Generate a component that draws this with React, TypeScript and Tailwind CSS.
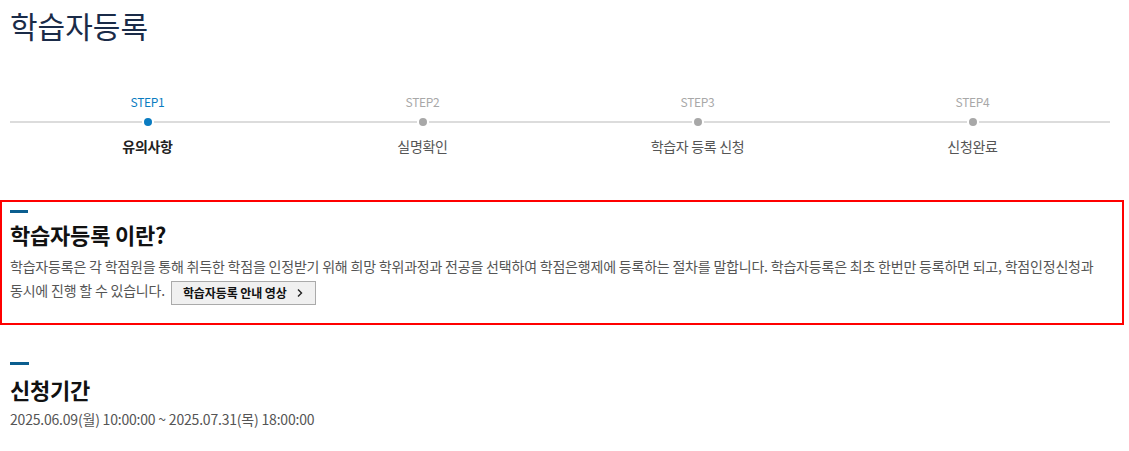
import React from "react";

const steps = [
  { step: "STEP1", name: "유의사항", active: true },
  { step: "STEP2", name: "실명확인", active: false },
  { step: "STEP3", name: "학습자 등록 신청", active: false },
  { step: "STEP4", name: "신청완료", active: false },
];

export default function App() {
  return (
    <div
      className="w-[1129px] h-[451px] bg-white overflow-hidden"
      style={{ fontFamily: '"Noto Sans CJK KR", "Noto Sans", sans-serif' }}
    >
      <h1 className="pl-[10px] pt-[5px] text-[30px] leading-[40px] font-normal text-[#1a2b48]">
        학습자등록
      </h1>

      <div className="ml-[10px] w-[1100px] mt-[48px] grid grid-cols-4">
        {steps.map((s) => (
          <div key={s.step} className="flex flex-col items-center">
            <div
              className={`text-[12px] leading-[18px] tracking-[-0.3px] ${
                s.active ? "text-[#0a7cc1]" : "text-[#a8a8a8]"
              }`}
            >
              {s.step}
            </div>
            <div className="w-full flex items-center mt-[7px] h-[8px]">
              <div className="flex-1 h-[2px] bg-[#dcdcdc]" />
              <div
                className={`w-[8px] h-[8px] rounded-full mx-[2px] ${
                  s.active ? "bg-[#0a7cc1]" : "bg-[#a8a8a8]"
                }`}
              />
              <div className="flex-1 h-[2px] bg-[#dcdcdc]" />
            </div>
            <div
              className={`mt-[10px] text-[14px] leading-[20px] tracking-[-0.3px] ${
                s.active ? "font-bold text-[#222]" : "text-[#555]"
              }`}
            >
              {s.name}
            </div>
          </div>
        ))}
      </div>

      <div className="mt-[44px] w-[1124px] h-[125px] border-2 border-[#ff0000] px-[8px] pt-[8px]">
        <div className="w-[18px] h-[3px] bg-[#0b5e8f]" />
        <h2 className="mt-[7px] text-[22px] leading-[28px] font-bold text-[#111] tracking-[-0.2px]">
          학습자등록 이란?
        </h2>
        <p className="mt-[6px] text-[14px] leading-[24px] text-[#555] tracking-[-0.2px] whitespace-nowrap">
          학습자등록은 각 학점원을 통해 취득한 학점을 인정받기 위해 희망 학위과정과 전공을 선택하여 학점은행제에 등록하는 절차를 말합니다. 학습자등록은 최초 한번만 등록하면 되고, 학점인정신청과
          <br />
          동시에 진행 할 수 있습니다.
          <button className="ml-[6px] inline-flex items-center align-[-2px] h-[24px] px-[11px] border border-[#aaa] bg-[#f0f0f0] text-[12px] font-bold text-[#111] leading-none tracking-[-0.1px]">
            학습자등록 안내 영상
            <svg width="8" height="10" viewBox="0 0 8 10" className="ml-[9px]">
              <path d="M2 1.5 L5.5 5 L2 8.5" fill="none" stroke="#222" strokeWidth="1.4" />
            </svg>
          </button>
        </p>
      </div>

      <div className="pl-[10px] mt-[37px]">
        <div className="w-[19px] h-[3px] bg-[#0b5e8f]" />
        <h2 className="mt-[10px] text-[22px] leading-[28px] font-bold text-[#111] tracking-[-0.2px]">
          신청기간
        </h2>
        <p className="mt-[6px] text-[14px] leading-[20px] text-[#555] tracking-[-0.2px]">
          2025.06.09(월) 10:00:00 ~ 2025.07.31(목) 18:00:00
        </p>
      </div>
    </div>
  );
}
